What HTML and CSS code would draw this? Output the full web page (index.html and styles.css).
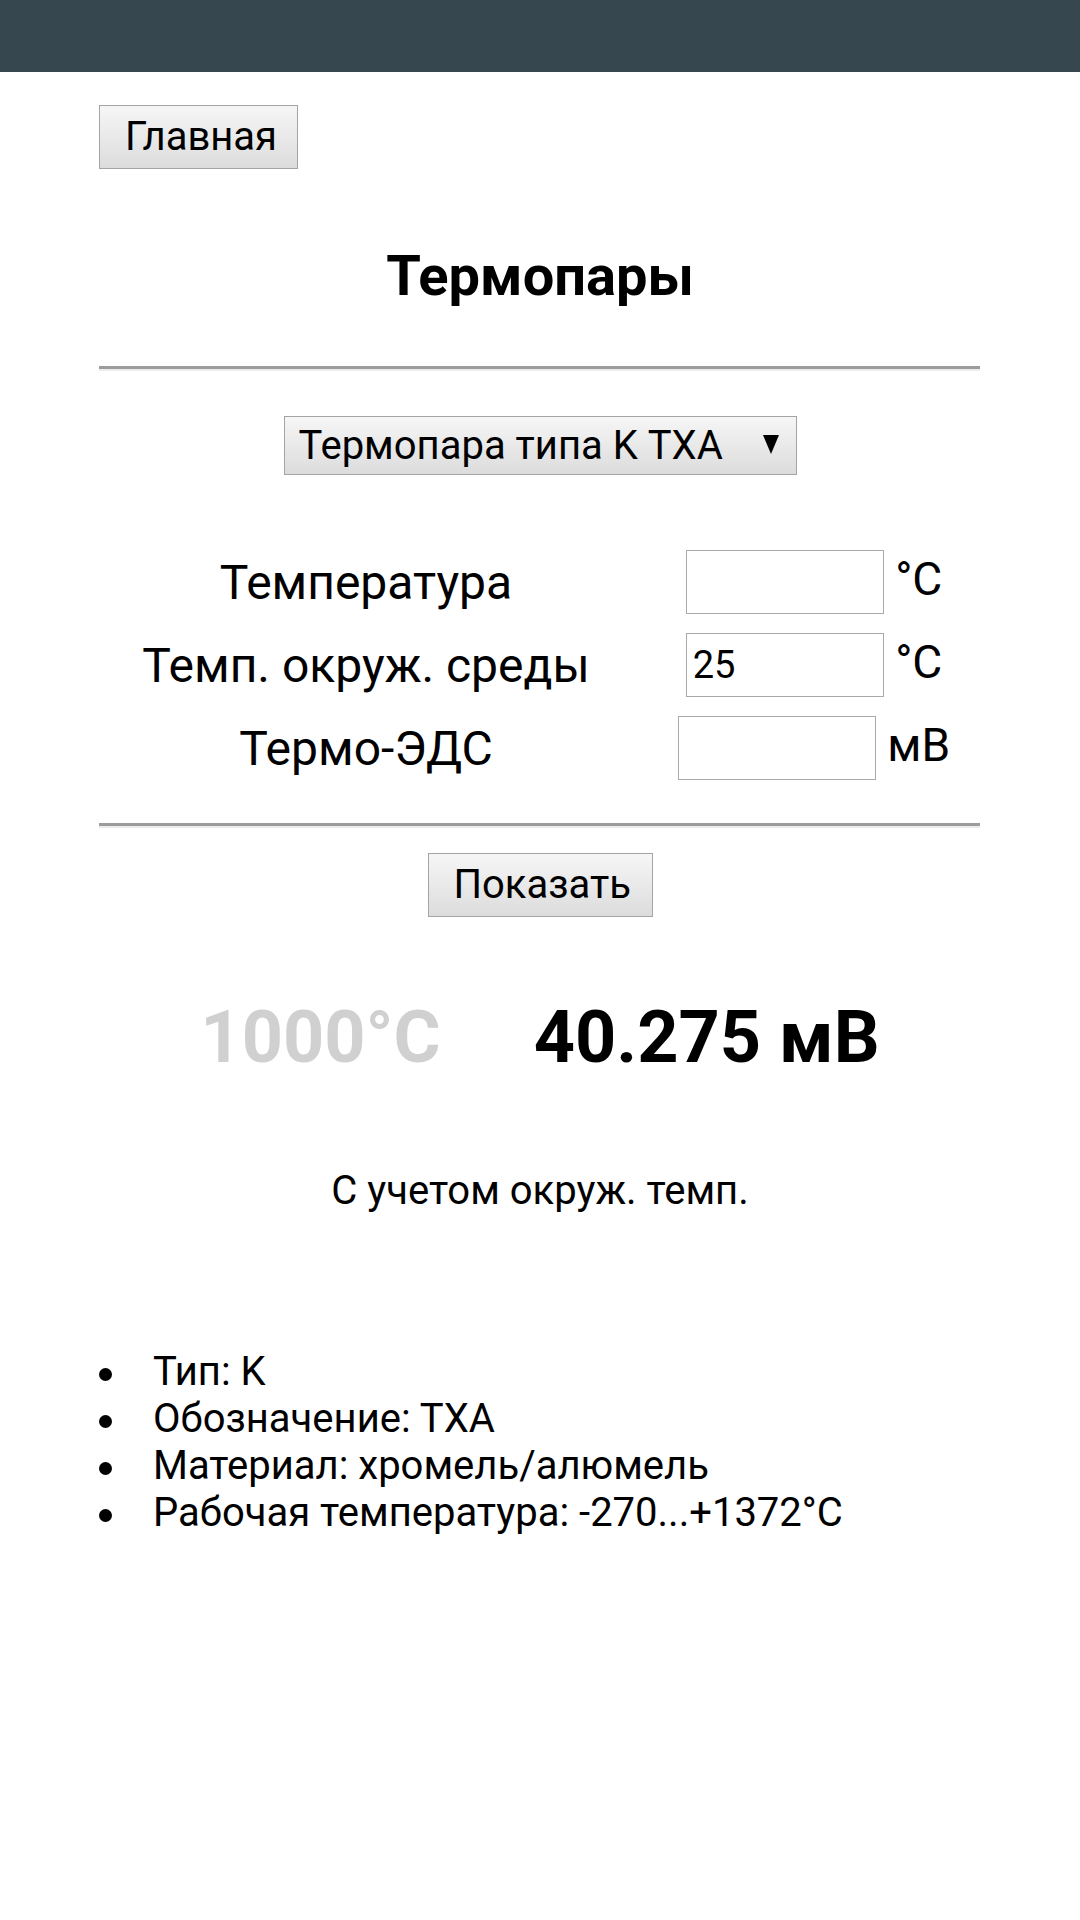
FILE: index.html
```html
<!DOCTYPE html>
<html lang="ru">
<head>
<meta charset="utf-8">
<title>Термопары</title>
<link rel="stylesheet" href="styles.css">
</head>
<body>
<header class="topbar"></header>
<main class="page">
  <div class="home-row"><button class="btn btn-home" type="button">Главная</button></div>
  <h1 class="title">Термопары</h1>
  <hr class="rule">
  <div class="select-row">
    <div class="select-wrap">
      <select class="tc-select">
        <option>Термопара типа K ТХА</option>
      </select>
      <svg class="select-arrow" width="16" height="20" viewBox="0 0 16 20"><polygon points="0,1 16,1 8,20" fill="#000"/></svg>
    </div>
  </div>
  <div class="calc">
    <div class="calc-label">Температура</div>
    <div class="calc-field"><input class="num" type="text" value=""> <span class="unit">°C</span></div>
    <div class="calc-label">Темп. окруж. среды</div>
    <div class="calc-field"><input class="num" type="text" value="25"> <span class="unit">°C</span></div>
    <div class="calc-label">Термо-ЭДС</div>
    <div class="calc-field"><input class="num" type="text" value=""> <span class="unit">мВ</span></div>
  </div>
  <hr class="rule rule-2">
  <div class="show-row"><button class="btn btn-show" type="button">Показать</button></div>
  <div class="results">
    <span class="res res-temp">1000°C</span>
    <span class="res res-emf">40.275 мВ</span>
  </div>
  <p class="note">С учетом окруж. темп.</p>
  <ul class="info">
    <li>Тип: K</li>
    <li>Обозначение: ТХА</li>
    <li>Материал: хромель/алюмель</li>
    <li>Рабочая температура: -270...+1372°C</li>
  </ul>
</main>
</body>
</html>
```
FILE: styles.css
```css
html, body {
  margin: 0;
  padding: 0;
  background: #fff;
}
body {
  font-family: Roboto, "Noto Sans", "Liberation Sans", sans-serif;
  color: #000;
  width: 1080px;
  height: 1920px;
  overflow: hidden;
}
.topbar {
  height: 72px;
  background: #37474f;
}
.page {
  padding: 0 99px;
}
.home-row {
  margin-top: 33px;
  display: flex;
}
.btn {
  font-family: Roboto, "Noto Sans", sans-serif;
  font-size: 40px;
  color: #000;
  height: 64px;
  border: 1px solid #a4a4a4;
  border-radius: 0;
  background: linear-gradient(#f6f6f6, #dcdcdc);
  padding: 0 25px;
  line-height: 62px;
  margin: 0;
}
.btn-home {
  width: 199px;
}
.title {
  margin: 75px 0 0;
  font-size: 56px;
  line-height: 64px;
  font-weight: 700;
  text-align: center;
}
.rule {
  margin: 58px 0 0;
  height: 0;
  border: 0;
  border-top: 3px solid #9c9c9c;
  border-bottom: 2px solid #ececec;
  width: 881px;
}
.select-row {
  margin-top: 45px;
  display: flex;
  justify-content: center;
}
.select-wrap {
  position: relative;
  width: 513px;
  height: 59px;
}
.tc-select {
  -webkit-appearance: none;
  appearance: none;
  width: 513px;
  height: 59px;
  margin: 0;
  border: 1px solid #a4a4a4;
  border-radius: 0;
  background: linear-gradient(#f6f6f6, #dcdcdc);
  font-family: Roboto, "Noto Sans", sans-serif;
  font-size: 40px;
  color: #000;
  padding: 0 0 0 14px;
  line-height: 57px;
}
.select-arrow {
  position: absolute;
  left: 479px;
  top: 18px;
  pointer-events: none;
}
.calc {
  margin-top: 75px;
  display: grid;
  grid-template-columns: 548px 348px;
  justify-content: center;
  row-gap: 19px;
  align-items: center;
  margin-left: -7px;
  margin-right: -7px;
}
.calc-label {
  font-size: 48px;
  text-align: center;
}
.calc-field {
  font-size: 46px;
  text-align: center;
  height: 64px;
  white-space: nowrap;
}
.num {
  box-sizing: border-box;
  width: 198px;
  height: 64px;
  margin: 0;
  border: 1px solid #aaaaaa;
  border-radius: 0;
  padding: 0 6px;
  font-family: Roboto, "Noto Sans", sans-serif;
  font-size: 38px;
  color: #000;
  background: #fff;
  vertical-align: baseline;
  outline: none;
}
.unit {
  font-size: 46px;
}
.rule-2 {
  margin-top: 43px;
}
.show-row {
  margin-top: 25px;
  display: flex;
  justify-content: center;
}
.btn-show {
  width: 225px;
}
.results {
  margin-top: 78px;
  display: flex;
  justify-content: center;
  gap: 93px;
  font-size: 72px;
  line-height: 86px;
  font-weight: 700;
}
.res-temp {
  color: #d0d0d0;
}
.res-emf {
  color: #000;
}
.note {
  margin: 86px 0 0;
  font-size: 40px;
  line-height: 47px;
  text-align: center;
}
.info {
  margin: 134px 0 0;
  padding: 0;
  font-size: 40px;
  line-height: 47px;
  list-style: none;
}
.info li {
  position: relative;
  padding-left: 54px;
}
.info li::before {
  content: "";
  position: absolute;
  left: 0;
  top: 20px;
  width: 13px;
  height: 13px;
  border-radius: 50%;
  background: #000;
}
```
